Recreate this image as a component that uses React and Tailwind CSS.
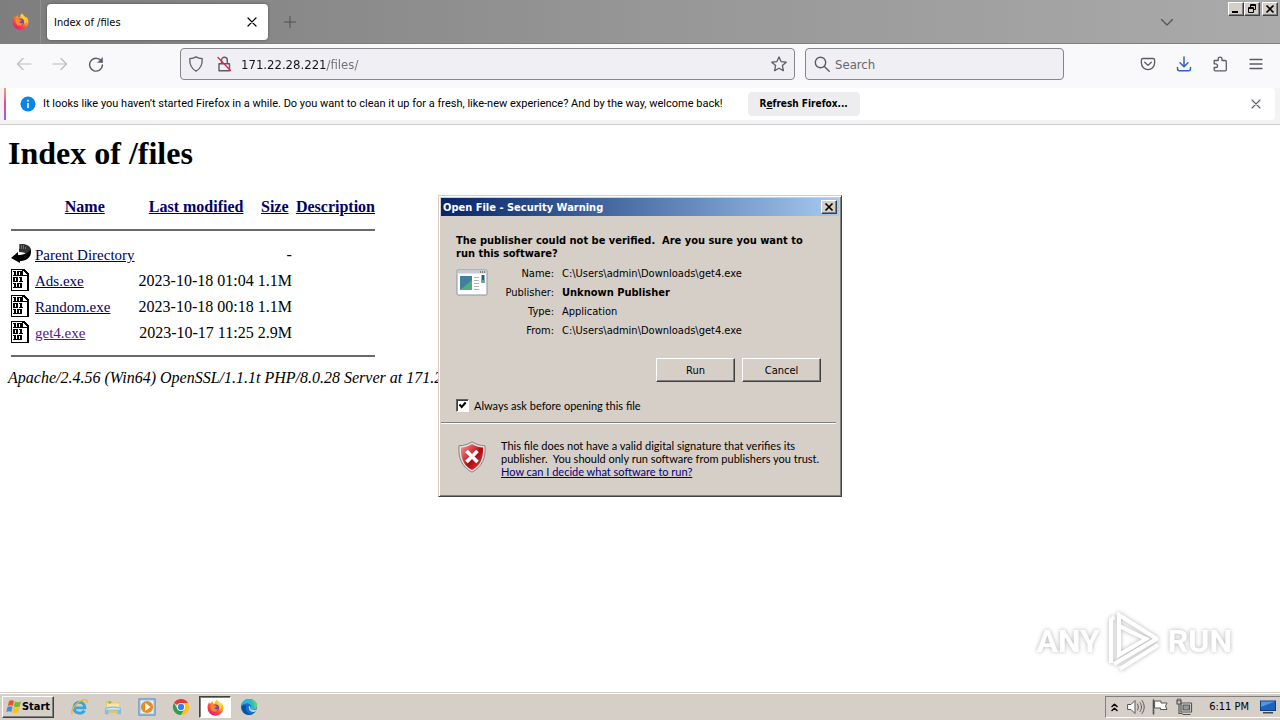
import React, { useId } from "react";

const ui = "font-['DejaVu_Sans_Condensed','Noto_Sans',sans-serif]";
const raised =
  "bg-[#d6cfc8] border border-t-white border-l-white border-r-[#404040] border-b-[#404040] shadow-[inset_-1px_-1px_0_#808080]";

function Firefox({ className }) {
  const id = useId();
  return (
    <svg viewBox="0 0 32 32" className={className} aria-hidden="true">
      <defs>
        <linearGradient id={id + "a"} x1="0.85" y1="0.05" x2="0.2" y2="0.95">
          <stop offset="0" stopColor="#fff14a" />
          <stop offset="0.35" stopColor="#ffa51e" />
          <stop offset="0.7" stopColor="#ff3d47" />
          <stop offset="1" stopColor="#e31587" />
        </linearGradient>
        <radialGradient id={id + "b"} cx="0.5" cy="0.4" r="0.6">
          <stop offset="0" stopColor="#7a4bff" />
          <stop offset="1" stopColor="#6a35b0" />
        </radialGradient>
      </defs>
      <path fill={`url(#${id}a)`} d="M30 12c-1-3-3-4.500-4.500-5 1 2 1.300 3 1.400 4C25 7 21 5.500 19 1c-3 2-4 5-4 7-1 0-2 .4-3 .8C11 7 11 5.500 11.500 4 8.500 5 6.500 8 5.500 9 4.500 8 4.500 6 5 4.500 2.500 7 1 11 1 17a15 14.500 0 0 0 30 0c0-2-.4-3.600-1-5z" />
      <circle cx="16" cy="17" r="6.500" fill={`url(#${id}b)`} />
      <path fill="#ff8a1e" d="M6 12c3-2 6-1 8 0 3 .2 4 1 4 1.600-.4 1.600-3 1.400-4 3.400 1 3 4 3.500 7 1.500-1 4-4 6-7.500 5.500C9 23.500 6 19 6 12z" />
      <path fill="#ffd02e" d="M19 1c-2.500 3-1.500 6 1 8.500 3 3 5 6 3.500 11 4-3 4.500-8 2-12C23.500 6 20.500 4.500 19 1z" />
    </svg>
  );
}

const line = { fill: "none", stroke: "currentColor", strokeLinecap: "round", strokeLinejoin: "round" };

function Icon({ size = "size-4", width = 1.2, children, box = "0 0 16 16", className = "" }) {
  return (
    <svg viewBox={box} className={`${size} ${className} shrink-0`} {...line} strokeWidth={width} aria-hidden="true">
      {children}
    </svg>
  );
}

function WinButton({ label, children, className = "" }) {
  return (
    <button type="button" aria-label={label} className={`${raised} flex h-[14px] w-4 items-center justify-center ${className}`}>
      <svg viewBox="0 0 10 10" className="size-[10px]" fill="none" stroke="#000" aria-hidden="true">
        {children}
      </svg>
    </button>
  );
}

function TabStrip() {
  return (
    <header className="flex h-11 shrink-0 items-start border-b border-[#808080] bg-linear-to-r from-[#7e7e7e] via-[#969696] to-[#aaaaaa]">
      <div className="flex h-[43px] w-[41px] items-center justify-center border-r border-[#909090]">
        <Firefox className="size-[17px]" />
      </div>
      <div className="mt-1 ml-[6px] flex h-9 w-[221px] items-center justify-between rounded bg-white pr-2 pl-[7px] shadow-[0_0_3px_rgba(0,0,0,0.4)]">
        <span className="pt-[2px]">Index of /files</span>
        <button type="button" aria-label="Close tab" className="flex size-4 items-center justify-center">
          <Icon size="size-[10px]" box="0 0 10 10" width={1.2}><path d="M1 1l8 8M9 1l-8 8" /></Icon>
        </button>
      </div>
      <button type="button" aria-label="New tab" className="mt-[14px] ml-[14px] flex size-4 items-center justify-center text-[#4e4e4e]">
        <Icon size="size-3" box="0 0 12 12" width={1}><path d="M6 .5v11M.5 6h11" /></Icon>
      </button>
      <button type="button" aria-label="List all tabs" className="mt-[14px] ml-auto flex size-4 items-center justify-center text-[#555]">
        <Icon size="size-[14px]" box="0 0 14 14" width={1.3}><path d="M1.500 4.500L7 10l5.500-5.500" /></Icon>
      </button>
      <div className="mt-[2px] mr-[2px] ml-[53px] flex">
        <WinButton label="Minimize"><path strokeWidth="2" d="M1 8h6" /></WinButton>
        <WinButton label="Restore">
          <path d="M3.500 3V.5h5v5H6.500M3 1.500h6M1.500 3.500h5v5h-5zM1 4.500h6" />
        </WinButton>
        <WinButton label="Close" className="ml-[2px]"><path strokeWidth="1.700" d="M1.500 1.500l7 7M8.500 1.500l-7 7" /></WinButton>
      </div>
    </header>
  );
}

const field = "flex h-8 items-center rounded border border-[#85858c] bg-[#f0f0f4]";

function NavBar() {
  return (
    <nav aria-label="Navigation" className="flex h-11 shrink-0 items-center bg-[#f9f9fb] pb-1 text-[#5b5b66]">
      <div className="flex w-[180px] shrink-0 gap-5 pl-4">
        <button type="button" aria-label="Back" className="text-[#bcbcc2]"><Icon><path d="M15 8H1.500M7 2.500L1.500 8 7 13.500" /></Icon></button>
        <button type="button" aria-label="Forward" className="text-[#bcbcc2]"><Icon><path d="M1 8h13.500M9 2.500L14.500 8 9 13.500" /></Icon></button>
        <button type="button" aria-label="Reload"><Icon width={1.400}><path d="M13.800 6A6.400 6.400 0 1 0 14.400 9" /><path fill="currentColor" d="M14.600 1.600v4.900H9.700z" strokeWidth=".4" /></Icon></button>
      </div>
      <div className={`${field} min-w-0 flex-[599] px-[7px]`}>
        <Icon width={1.300}><path d="M8 .9C6 2.100 4 2.500 1.800 2.600 1.500 8 3 12.500 8 15.100c5-2.600 6.500-7.100 6.200-12.500C12 2.500 10 2.100 8 .9z" /></Icon>
        <Icon className="ml-3" width={1.400}>
          <path d="M5.500 7V4.200a2.900 2.900 0 0 1 5.800 0V7M3 7.700h10.500v7H3z" />
          <path stroke="#e22850" d="M2 1.500l12.500 13" />
        </Icon>
        <input
          aria-label="Address"
          defaultValue="171.22.28.221/files/"
          className="ml-[9px] min-w-0 flex-1 bg-[linear-gradient(to_right,#15141a_86px,#6d6d76_86px)] bg-clip-text pt-px text-[13px] text-transparent caret-black outline-none"
        />
        <button type="button" aria-label="Bookmark this page">
          <Icon width={1.300}><path d="M8 .9l2.100 4.700 5.100.6-3.800 3.400 1 5.100L8 12.200l-4.400 2.500 1-5.100L.8 6.200l5.100-.6z" /></Icon>
        </button>
      </div>
      <label className={`${field} ml-[10px] min-w-0 flex-[241] px-2`}>
        <Icon width={1.400}><circle cx="6.500" cy="6.500" r="5.200" /><path d="M10.400 10.400l4.800 4.800" /></Icon>
        <input
          aria-label="Search"
          placeholder="Search"
          className="ml-[5px] min-w-0 flex-1 bg-transparent pt-px text-[13px] text-[#15141a] outline-none placeholder:text-[#66666e]"
        />
      </label>
      <div className="flex w-[216px] shrink-0 justify-end gap-5 pr-4">
        <button type="button" aria-label="Save to Pocket"><Icon width={1.300}><path d="M3 2.500h10a1.600 1.600 0 0 1 1.600 1.600V7a6.600 6.600 0 0 1-13.200 0V4.100A1.600 1.600 0 0 1 3 2.500z" /><path d="M4.700 6.200L8 9.400l3.300-3.200" /></Icon></button>
        <button type="button" aria-label="Downloads" className="text-[#2f62c4]"><Icon width={1.500}><path d="M8 1v9.500M4 6.800l4 4 4-4M1.500 11.500v1.300a2 2 0 0 0 2 2h9a2 2 0 0 0 2-2v-1.300" /></Icon></button>
        <button type="button" aria-label="Extensions"><Icon width={1.300}><path d="M2.200 4.500h4V3a1.900 1.900 0 0 1 3.800 0v1.500h3.300a1 1 0 0 1 1 1v8.300a1 1 0 0 1-1 1H3.200a1 1 0 0 1-1-1V11.500h1.500a1.800 1.800 0 0 0 0-3.700H2.200z" /></Icon></button>
        <button type="button" aria-label="Menu"><Icon width={1.300}><path d="M2 3.500h12M2 8h12M2 12.500h12" /></Icon></button>
      </div>
    </nav>
  );
}

function Notice() {
  return (
    <div role="status" className="shrink-0 border-b border-[#cccccc] bg-[#f3f3f5] pb-1">
      <div className="mr-[5px] ml-[4px] flex h-8 items-center rounded-r bg-white">
        <span className="h-8 w-[2px] shrink-0 bg-linear-to-b from-[#ff9a5a] via-[#e0439c] to-[#9059ff]" />
        <svg viewBox="0 0 16 16" className="ml-[14px] size-4 shrink-0" aria-hidden="true">
          <circle cx="8" cy="8" r="7.500" fill="#0a84e8" />
          <path stroke="#fff" strokeWidth="1.600" d="M8 7v5M8 3.800v1.600" />
        </svg>
        <p className="ml-[7px] font-['Roboto',sans-serif] whitespace-nowrap">
          It looks like you haven’t started Firefox in a while. Do you want to clean it up for a fresh, like-new experience? And by the way, welcome back!
        </p>
        <button type="button" className="ml-[25px] h-6 w-28 shrink-0 rounded bg-[#ededef] text-[10px] font-bold">
          R<span className="underline">e</span>fresh Firefox...
        </button>
        <button type="button" aria-label="Dismiss" className="mr-[11px] ml-auto flex size-4 items-center justify-center text-[#5b5b66]">
          <Icon size="size-[10px]" box="0 0 10 10" width={1.1}><path d="M1 1l8 8M9 1l-8 8" /></Icon>
        </button>
      </div>
    </div>
  );
}

function BackIcon() {
  return (
    <svg viewBox="0 0 20 22" className="h-[22px] w-5" aria-hidden="true">
      <path fill="#333" d="M8 1.500c6-1.500 11 1 12 5L17 12C15 10 12 9 8 9z" />
      <path fill="#000" d="M20 6c1 8-4 12-11 12v2L0 15l7-6v3c5 0 10-2 13-6z" />
      <path stroke="#aaa" strokeDasharray="1 1" d="M8 3h6M8 5h8" />
    </svg>
  );
}

const ONE = "h3v4h1v1h-4v-1h1v-3h-1z";
const ZERO = "h5v5h-5zm2 1v3h1v-3z";

function BinaryIcon() {
  return (
    <svg viewBox="0 0 20 22" className="h-[22px] w-5" shapeRendering="crispEdges" aria-hidden="true">
      <path fill="#000" fillRule="evenodd" d="M0 0h13l5 5v17H0zM1 1v20h15V7h-5V1zM12 2v4h4z" />
      <path fill="#000" fillRule="evenodd" d={`M2 2${ONE}M6 2${ZERO}M2 8${ZERO}M8 8${ONE}M2 14${ONE}M6 14${ZERO}`} />
    </svg>
  );
}

const rows = [
  { name: "Parent Directory", modified: "", size: "-", up: true },
  { name: "Ads.exe", modified: "2023-10-18 01:04", size: "1.1M" },
  { name: "Random.exe", modified: "2023-10-18 00:18", size: "1.1M" },
  { name: "get4.exe", modified: "2023-10-17 11:25", size: "2.9M", visited: true },
];

const cell = "px-px pt-[3px] pb-px";

function Rule() {
  return (
    <tr>
      <td colSpan={5} className="p-px"><hr className="my-2 border-t-2 border-[#6a6a6a]" /></td>
    </tr>
  );
}

function Listing() {
  return (
    <main className="min-h-0 flex-1 overflow-hidden bg-white px-2 pt-2 font-['Liberation_Serif',serif] text-base text-black">
      <h1 className="text-[32px] leading-10 font-bold">Index of /files</h1>
      <table className="mt-[19px] border-separate border-spacing-[2px] leading-[18px]">
        <thead>
          <tr className="h-6 text-[#000066]">
            <th className="w-[22px] p-px" aria-label="Icon" />
            {["Name", "Last modified", "Size", "Description"].map((h) => (
              <th key={h} className={`${cell} font-bold`}><a href="#" className="underline">{h}</a></th>
            ))}
          </tr>
        </thead>
        <tbody>
          <Rule />
          {rows.map((r) => (
            <tr key={r.name}>
              <td className="p-px align-top">{r.up ? <BackIcon /> : <BinaryIcon />}</td>
              <td className={`${cell} text-[15px]`}><a href="#" className={r.visited ? "text-[#551a8b] underline" : "text-[#000066] underline"}>{r.name}</a></td>
              <td className={`${cell} text-right`}>{r.modified}</td>
              <td className={`${cell} text-right`}>{r.size}</td>
              <td className={cell} />
            </tr>
          ))}
          <Rule />
        </tbody>
      </table>
      <address className="leading-5 whitespace-nowrap italic">Apache/2.4.56 (Win64) OpenSSL/1.1.1t PHP/8.0.28 Server at 171.22.28.221 Port 80</address>
    </main>
  );
}

function Watermark() {
  return (
    <div className="absolute right-12 bottom-12 flex items-center gap-[6px] font-['Roboto',sans-serif] text-[32px] leading-none font-bold text-white [filter:drop-shadow(0_0_2px_rgba(0,0,0,0.3))]">
      <span>ANY</span>
      <svg viewBox="0 0 56 62" className="h-[62px] w-14" fill="none" stroke="#fff" strokeWidth="4" aria-hidden="true">
        <path d="M5 53V10l3-3" />
        <path d="M13 44V5l38 24" />
        <path d="M13 16v29l27-16z" />
        <path d="M8 54l44-26M14 59l38-24" />
      </svg>
      <span>RUN</span>
    </div>
  );
}

function AppIcon() {
  return (
    <svg viewBox="0 0 32 27" className="h-[27px] w-8" aria-hidden="true">
      <rect x="1" y="1" width="30" height="25" rx="1" fill="#fff" stroke="#8795a5" />
      <rect x="2" y="1.500" width="28" height="3" fill="#c4ccd6" />
      <path stroke="#333" d="M24 3h5" strokeDasharray="1 1" />
      <rect x="4" y="7" width="12" height="14" fill="#3f7fa0" />
      <path fill="#4fae7c" d="M4 21l12-10v10z" />
      <path stroke="#b3b3b3" d="M18 8.500h5M18 11.500h5M18 14.500h5M18 17.500h5M18 20.500h5" />
      <rect x="25.500" y="6" width="3" height="8" fill="#2c5c8c" />
      <rect x="25.500" y="11" width="3" height="3" fill="#58ab8f" />
    </svg>
  );
}

function Shield() {
  return (
    <svg viewBox="0 0 28 32" className="h-8 w-7" aria-hidden="true">
      <defs>
        <linearGradient id="shield" x1="0" y1="0" x2="1" y2="1">
          <stop offset="0" stopColor="#f0a0a0" />
          <stop offset="0.45" stopColor="#c8282c" />
          <stop offset="0.55" stopColor="#b0080e" />
          <stop offset="1" stopColor="#e0484a" />
        </linearGradient>
      </defs>
      <path fill="#e6e2e0" stroke="#8c7f7d" d="M14 .8C10 3.500 6 4.500 1 4.800 0 17 4 26 14 31.200 24 26 28 17 27 4.800 22 4.500 18 3.500 14 .8z" />
      <path fill="url(#shield)" d="M14 3c-3.500 2.200-7 3.200-11 3.500C2.500 17 5.500 24.500 14 29c8.500-4.500 11.500-12 11-22.500C21 6.200 17.500 5.200 14 3z" />
      <path stroke="#fff" strokeWidth="3.600" d="M8.500 10l11 11M19.500 10l-11 11" />
    </svg>
  );
}

const details = [
  ["Name:", "C:\\Users\\admin\\Downloads\\get4.exe"],
  ["Publisher:", "Unknown Publisher"],
  ["Type:", "Application"],
  ["From:", "C:\\Users\\admin\\Downloads\\get4.exe"],
];

function Dialog() {
  const btn = `${raised} h-6 w-[79px]`;
  const text = "font-['Lato',sans-serif]";
  return (
    <div className="absolute inset-x-0 top-0 bottom-7 flex items-center justify-center">
      <section
        role="dialog"
        aria-labelledby="dlg"
        className="w-[404px] border border-[#d6cfc8] border-r-[#404040] border-b-[#404040] bg-[#d6cfc8] p-[2px] leading-[13px] shadow-[inset_1px_1px_0_#fff,inset_-1px_-1px_0_#808080]"
      >
        <header className="flex h-[18px] items-center justify-between bg-linear-to-r from-[#0a246a] to-[#a6caf0] pr-[2px] pl-[2px]">
          <h2 id="dlg" className="font-bold text-white">Open File - Security Warning</h2>
          <WinButton label="Close"><path strokeWidth="1.700" d="M1.500 1.500l7 7M8.500 1.500l-7 7" /></WinButton>
        </header>
        <div className="pt-[18px] pr-[18px] pl-[15px]">
          <p className="font-bold whitespace-pre-line">{"The publisher could not be verified.\u00a0 Are you sure you want to\nrun this software?"}</p>
          <div className="mt-1 flex">
            <div className="w-8 shrink-0 pt-[5px]"><AppIcon /></div>
            <dl className="grid flex-1 grid-cols-[66px_1fr] gap-x-[8px] leading-[19px]">
              {details.map(([k, v]) => (
                <React.Fragment key={k}>
                  <dt className="text-right">{k}</dt>
                  <dd className={k === "Publisher:" ? "font-bold" : ""}>{v}</dd>
                </React.Fragment>
              ))}
            </dl>
          </div>
          <div className="mt-[18px] flex justify-end gap-[7px]">
            <button type="button" className={btn}>Run</button>
            <button type="button" className={btn}>Cancel</button>
          </div>
          <label className={`mt-[17px] flex items-center gap-[5px] ${text}`}>
            <span className="relative flex size-[13px]">
              <input
                type="checkbox"
                defaultChecked
                className="peer size-[13px] appearance-none border border-t-[#606060] border-r-white border-b-white border-l-[#606060] bg-white shadow-[inset_1px_1px_0_#404040]"
              />
              <svg viewBox="0 0 13 13" className="pointer-events-none absolute inset-0 hidden peer-checked:block" fill="none" stroke="#000" strokeWidth="2" aria-hidden="true">
                <path d="M3.500 5.500L5.700 8l4-4.500" />
              </svg>
            </span>
            Always ask before opening this file
          </label>
        </div>
        <hr className="mt-[10px] mr-[3px] h-[2px] border-t border-b border-t-[#808080] border-b-white" />
        <div className="flex gap-[15px] pt-[15px] pb-4 pl-[17px]">
          <div className="pt-[2px]"><Shield /></div>
          <p className={`whitespace-pre ${text}`}>
            {"This file does not have a valid digital signature that verifies its\npublisher.\u00a0 You should only run software from publishers you trust.\n"}
            <a href="#" className="text-[#000080] underline">How can I decide what software to run?</a>
          </p>
        </div>
      </section>
    </div>
  );
}

const ic = "size-[18px]";
function IE() {
  return (
    <svg viewBox="0 0 20 20" className={ic} fill="none" aria-hidden="true">
      <path stroke="#36a5e0" strokeWidth="3.200" d="M4.500 11h12c0-8-11.500-8.500-12-.5C4.300 17.500 13 18.500 16 14" />
      <path stroke="#e8b72c" strokeWidth="1.500" d="M3 18C-1 16 7 4 15 2c4-1 4.500 1 3.500 3.500" />
    </svg>
  );
}
function Folder() {
  return (
    <svg viewBox="0 0 20 20" className={ic} aria-hidden="true">
      <path fill="#e9c460" d="M2 3h6l1 2h9v12H2z" />
      <path fill="#f8e6a4" d="M3 6h14v7H3z" />
      <path fill="#6fc04a" d="M5 4h3v2H5z" />
      <path fill="#7cc0e8" d="M1 11c6-2 12-2 18 0v7h-4v-4H5v4H1z" />
      <path fill="#c7e5f6" d="M2 12c5-1.500 11-1.500 16 0v1H2z" />
    </svg>
  );
}
function Media() {
  return (
    <svg viewBox="0 0 20 20" className={ic} aria-hidden="true">
      <rect x="1" y="1" width="18" height="18" fill="#a9cdec" stroke="#4e86b8" />
      <rect x="3" y="3" width="14" height="14" fill="#e4f0fa" />
      <circle cx="10" cy="10" r="6.800" fill="#f08a1c" />
      <path fill="#fff" d="M8 5.500l6 4.500-6 4.500z" />
    </svg>
  );
}
function Chrome() {
  return (
    <svg viewBox="0 0 20 20" className={ic} aria-hidden="true">
      <path fill="#e33b2e" d="M10 10L2.200 5.500a9 9 0 0 1 15.600 0z" />
      <path fill="#fbc116" d="M10 10V5.500h7.800A9 9 0 0 1 10 19z" />
      <path fill="#2da04e" d="M10 19A9 9 0 0 1 2.200 5.500L6.100 12.200 10 14.500l3.500-2z" />
      <circle cx="10" cy="10" r="4.500" fill="#fff" />
      <circle cx="10" cy="10" r="3.500" fill="#3b7ded" />
    </svg>
  );
}
function Edge() {
  return (
    <svg viewBox="0 0 20 20" className={ic} aria-hidden="true">
      <circle cx="10" cy="10" r="9" fill="#1470c8" />
      <path fill="#2bb9d0" d="M1 9.500C2 4 6 1 10 1c5.500 0 9 4 9 7.500 0 3-2.500 4.500-5 4.500-1.600 0-2.700-.8-2-1.700C13.500 8 10 5.500 7 6 4 6.300 2 7.500 1 9.500z" />
      <path fill="#5fd36b" d="M12 1.300c4 1 7 4 7 7.200 0 2-1.300 3.500-3 4.200 1-4-1-8.700-4-11.400z" />
      <path fill="#0c4fa0" d="M7 9c-2 5 2 9.500 7 9C8 21 1.500 16 2 10c1-2 3-2.500 5-1z" />
      <path fill="#d6cfc8" d="M10 8.500c2 1 2 2.500 1.300 3.300 1.700 2 5 2 7.700.7l-1 2c-4 2.500-9.500 0-8-6z" />
    </svg>
  );
}

const pinned = [
  ["Internet Explorer", <IE />],
  ["File Explorer", <Folder />],
  ["Media Player", <Media />],
  ["Chrome", <Chrome />],
  ["Firefox", <Firefox className="size-[17px]" />],
  ["Edge", <Edge />],
];

function Taskbar() {
  return (
    <footer className="flex h-7 shrink-0 items-center border-t border-[#d6cfc8] bg-[#d6cfc8] pt-px pl-[2px] shadow-[inset_0_1px_0_#fff]">
      <button type="button" className={`${raised} flex h-[22px] w-[52px] items-center justify-center text-[11px] font-bold`}>
        <svg viewBox="0 0 16 16" className="size-4 shrink-0" aria-hidden="true">
          <path fill="#e8562a" d="M3 2c2-1 3.500-1 5 0L6.800 7C5.300 6 3.800 6 1.800 7z" />
          <path fill="#7cb82f" d="M9 2.600c2 1 3.500 1 6 0l-1.300 5c-2 1-4 1-5.900 0z" />
          <path fill="#3b8ede" d="M1.500 8c2-1 3.500-1 5 0l-1.200 5c-1.500-1-3-1-5 0z" />
          <path fill="#f8c21c" d="M7.500 8.600c2 1 3.500 1 5.900 0l-1.300 5c-2 1-4 1-5.900 0z" />
        </svg>
        Start
      </button>
      <div className="ml-[9px] flex gap-[2px]">
        {pinned.map(([name, icon]) => (
          <button
            key={name}
            type="button"
            aria-label={name}
            className={
              name === "Firefox"
                ? "flex h-[22px] w-8 items-center justify-center border border-t-[#404040] border-r-white border-b-white border-l-[#404040] bg-white shadow-[inset_1px_1px_0_#808080]"
                : "flex h-[22px] w-8 items-center justify-center"
            }
          >
            {icon}
          </button>
        ))}
      </div>
      <div className="ml-auto flex h-[22px] items-center border border-r-0 border-t-[#808080] border-b-white border-l-[#808080] pr-1 pl-1 text-[#555]">
        <button type="button" aria-label="Show hidden icons" className="text-black"><Icon size="size-[9px]" box="0 0 9 9" width={1.500}><path d="M2 3.500l2.500-2.300L7 3.500M2 7.500l2.500-2.300L7 7.500" /></Icon></button>
        <Icon className="ml-[8px]" size="size-[18px]" box="0 0 18 18" width={1}>
          <path fill="#fff" d="M1 6.500h3l4-4v13l-4-4H1z" />
          <path d="M10.500 6c1 2 1 4 0 6M13 4.500c2 3 2 6 0 9M15 2.500c3 4 3 9 0 13" />
        </Icon>
        <Icon className="ml-[6px]" size="size-[18px]" box="0 0 18 18" width={1}>
          <path strokeWidth="1.600" d="M2.500 2v14" /><path fill="#fff" d="M4 3h6v2h6l-1.500 3 1.500 3.500H9.500V10H4z" />
        </Icon>
        <Icon className="ml-[6px]" size="size-[18px]" box="0 0 18 18" width={1.200}>
          <path fill="#ddd" d="M6 5h10.500v9H6z" /><path fill="#999" d="M8 7h6.500v5H8z" />
          <path d="M8 16.500h7M2 2v4h4V2M3 .8V3M5 .8V3M4 6v9.500h3" />
        </Icon>
        <time className="ml-[16px] whitespace-nowrap text-black">6:11 PM</time>
        <button type="button" aria-label="Show desktop" className="ml-[11px]">
          <svg viewBox="0 0 16 14" className="h-[14px] w-4" aria-hidden="true">
            <rect x=".5" y="1" width="15" height="9.500" fill="#1d62bc" stroke="#0f3f82" />
            <path fill="#4f97e3" d="M1 1.500h14L1 7z" />
            <path fill="#444" d="M3 12h10v1.500H3z" />
          </svg>
        </button>
      </div>
    </footer>
  );
}

export default function App() {
  return (
    <div className={`relative flex h-screen flex-col overflow-hidden text-[11px] leading-4 text-black ${ui}`}>
      <TabStrip />
      <NavBar />
      <Notice />
      <Listing />
      <Taskbar />
      <Watermark />
      <Dialog />
    </div>
  );
}
